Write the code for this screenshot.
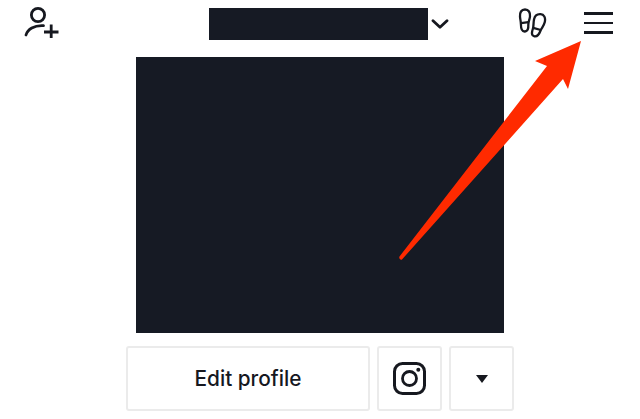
<template>
  <div class="profile">
    <header class="top-bar">
      <svg class="add-user" width="38" height="34" viewBox="0 0 38 34" fill="none" stroke="#16181f" stroke-width="2.8">
        <circle cx="15" cy="11" r="6.600" />
        <path d="M3 31 C4.500 25.500 11 21 20.500 21.600" stroke-linecap="round" />
        <path d="M21 28h14.500M28.200 20.500v15" />
      </svg>
      <div class="account">
        <div class="account-name"></div>
        <svg class="chevron" width="18" height="10" viewBox="0 0 18 10" fill="none" stroke="#16181f" stroke-width="2.800" stroke-linecap="round" stroke-linejoin="round">
          <path d="M2 1.800 9 8.200 16 1.800" />
        </svg>
      </div>
      <svg class="steps" width="30" height="30" viewBox="0 0 30 30" fill="none" stroke="#16181f" stroke-width="2.300">
        <path d="M8 1.500C4.300 1.500 2.700 4.500 3 8.500 3.200 11.500 3.900 13.500 3.900 16 3.900 19.500 4 23.500 7.500 23.500 11 23.500 11.500 20 11.300 17 11.100 14.500 12.700 11.500 13 8.500 13.300 4.500 11.700 1.500 8 1.500Z" />
        <path d="M4 15.200 11.400 14.200" />
        <path d="M23.500 6.200C27 6.400 28.800 9.500 27.800 14 27 17.500 25 19.500 23.800 22 22.500 25.500 21 29 17.500 28.300 14 27.500 14.800 24 15.800 21 16.800 18 16.300 15 17 11.500 17.700 8 20 6 23.500 6.200Z" />
        <path d="M16.200 19.800 23.800 22" />
      </svg>
      <div class="menu">
        <span></span>
        <span></span>
        <span></span>
      </div>
    </header>

    <div class="photo"></div>

    <div class="actions">
      <button class="btn edit">Edit profile</button>
      <button class="btn square">
        <svg width="34" height="34" viewBox="0 0 34 34" fill="none" stroke="#16181f">
          <rect x="1.500" y="1.500" width="30" height="30" rx="8" stroke-width="3" />
          <circle cx="16.500" cy="16.500" r="7" stroke-width="2.800" />
          <circle cx="25.300" cy="7.700" r="2" fill="#16181f" stroke="none" />
        </svg>
      </button>
      <button class="btn square">
        <span class="caret"></span>
      </button>
    </div>

    <svg class="pointer" width="640" height="419" viewBox="0 0 640 419">
      <path d="M581 41 535 61 547 66 399.500 256.500 C398.500 258.500 400.500 260.500 402 259.500 L563 79 568 89Z" fill="#ff2a00" />
    </svg>
  </div>
</template>

<style scoped>
.profile {
  position: relative;
  width: 640px;
  height: 419px;
  overflow: hidden;
  background: #fff;
  font-family: Inter, "Liberation Sans", sans-serif;
}
.top-bar {
  display: flex;
  align-items: flex-start;
  height: 57px;
  box-sizing: border-box;
  padding: 4px 27px 0 23px;
}
.add-user {
  flex: none;
}
.account {
  display: flex;
  align-items: center;
  gap: 3px;
  margin: 4px 0 0 148px;
}
.account-name {
  width: 219px;
  height: 32px;
  background: #161a24;
}
.chevron {
  flex: none;
}
.steps {
  flex: none;
  margin: 4px 0 0 68px;
}
.menu {
  display: flex;
  flex-direction: column;
  gap: 7px;
  width: 29px;
  margin: 8px 0 0 auto;
}
.menu span {
  display: block;
  height: 2.500px;
  background: #16181f;
}
.photo {
  width: 368px;
  height: 276px;
  margin: 0 auto;
  background: #161a24;
}
.actions {
  display: flex;
  gap: 7px;
  margin: 13px 0 0 126px;
}
.btn {
  display: flex;
  align-items: center;
  justify-content: center;
  box-sizing: border-box;
  height: 65px;
  padding: 0;
  background: #fff;
  border: 2px solid #ebebeb;
  border-radius: 3px;
  color: #16181f;
  font: inherit;
}
.edit {
  width: 244px;
  font-size: 20.800px;
  font-weight: 500;
}
.square {
  width: 65px;
}
.caret {
  width: 0;
  height: 0;
  border-left: 6.500px solid transparent;
  border-right: 6.500px solid transparent;
  border-top: 8px solid #16181f;
}
.pointer {
  position: absolute;
  top: 0;
  left: 0;
  pointer-events: none;
}
</style>
